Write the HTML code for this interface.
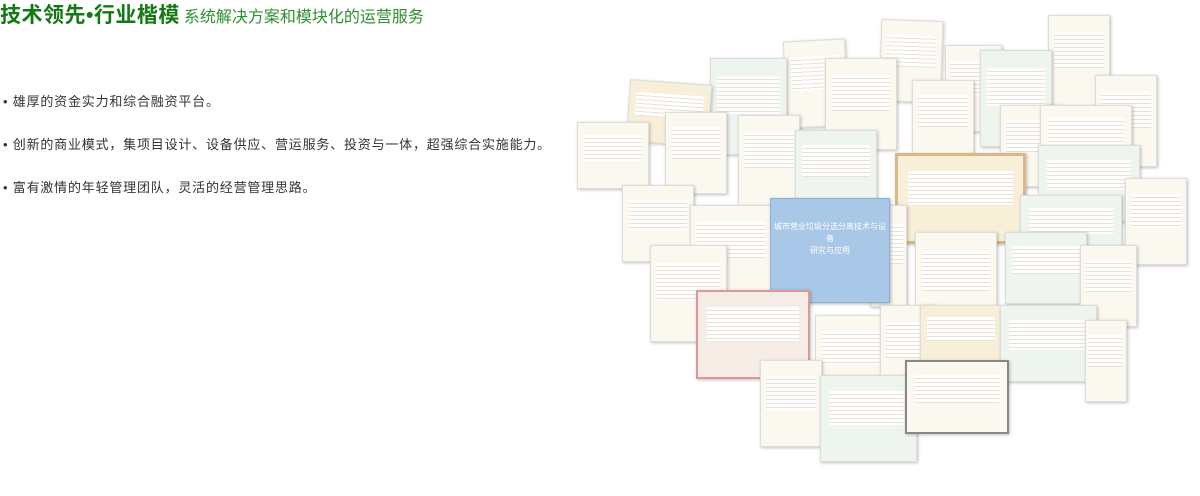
<!DOCTYPE html><html><head><meta charset="utf-8"><style>
body{margin:0;width:1200px;height:496px;background:#fff;position:relative;overflow:hidden;font-family:"Liberation Sans","Noto Sans CJK SC",sans-serif}
.t{position:absolute;left:0;top:-1px;white-space:nowrap}
.t b{font-size:21px;color:#137a13;letter-spacing:0.5px}
.t span{font-size:16px;color:#2f8f2f;margin-left:4px}
.p{position:absolute;left:3px;font-size:13px;color:#333;white-space:nowrap;letter-spacing:0.8px}
.c{position:absolute;background:#fbf8ef;border:1px solid #ddd;box-shadow:1px 1px 3px rgba(0,0,0,.25)}
.c:after{content:"";position:absolute;left:8%;right:8%;top:18%;height:40%;background:repeating-linear-gradient(#fff 0 3px,#e8e2d4 3px 4px)}
.c.g{background:#eef5ee}.c.y{background:#f7efd8}.c.r{background:#f6ece6}
</style></head><body>
<div class="t"><b>技术领先•行业楷模</b><span>系统解决方案和模块化的运营服务</span></div>
<div class="p" style="top:91px">• 雄厚的资金实力和综合融资平台。</div>
<div class="p" style="top:134px">• 创新的商业模式，集项目设计、设备供应、营运服务、投资与一体，超强综合实施能力。</div>
<div class="p" style="top:177px">• 富有激情的年轻管理团队，灵活的经营管理思路。</div>

<div class="c" style="left:880px;top:20px;width:60px;height:80px;transform:rotate(2deg)"></div>
<div class="c" style="left:1048px;top:15px;width:60px;height:90px"></div>
<div class="c" style="left:785px;top:40px;width:60px;height:85px;transform:rotate(-3deg)"></div>
<div class="c g" style="left:710px;top:58px;width:75px;height:95px"></div>
<div class="c" style="left:825px;top:58px;width:70px;height:90px"></div>
<div class="c" style="left:945px;top:45px;width:55px;height:85px"></div>
<div class="c g" style="left:980px;top:50px;width:70px;height:95px"></div>
<div class="c" style="left:1095px;top:75px;width:60px;height:90px"></div>
<div class="c y" style="left:628px;top:82px;width:80px;height:60px;transform:rotate(4deg)"></div>
<div class="c" style="left:577px;top:122px;width:70px;height:65px"></div>
<div class="c" style="left:665px;top:112px;width:60px;height:80px"></div>
<div class="c" style="left:738px;top:115px;width:60px;height:90px"></div>
<div class="c g" style="left:795px;top:130px;width:80px;height:80px"></div>
<div class="c" style="left:1000px;top:105px;width:60px;height:80px"></div>
<div class="c" style="left:1040px;top:105px;width:90px;height:65px"></div>
<div class="c" style="left:912px;top:80px;width:60px;height:80px"></div>
<div class="c y" style="left:895px;top:153px;width:125px;height:85px;border:3px solid #d7b98a"></div>
<div class="c g" style="left:1038px;top:145px;width:100px;height:75px"></div>
<div class="c" style="left:1125px;top:178px;width:60px;height:85px"></div>
<div class="c" style="left:622px;top:185px;width:70px;height:75px"></div>
<div class="c" style="left:690px;top:205px;width:80px;height:90px"></div>
<div class="c" style="left:870px;top:205px;width:35px;height:100px"></div>
<div class="c g" style="left:1020px;top:195px;width:100px;height:65px"></div>
<div class="c" style="left:915px;top:232px;width:80px;height:100px"></div>
<div class="c g" style="left:1005px;top:232px;width:80px;height:70px"></div>
<div class="c" style="left:1080px;top:245px;width:55px;height:80px"></div>
<div class="c" style="left:650px;top:245px;width:75px;height:95px"></div>
<div style="position:absolute;left:770px;top:198px;width:120px;height:105px;background:#a9c7e6;border:1px solid #8cb0d6;box-shadow:1px 1px 3px rgba(0,0,0,.3);font-size:8px;color:#fff;text-align:center;padding-top:22px;box-sizing:border-box;line-height:12px">城市营业垃圾分选分离技术与设备<br>研究与应用</div>
<div class="c r" style="left:696px;top:290px;width:110px;height:85px;border:2px solid #d99"></div>
<div class="c" style="left:815px;top:315px;width:75px;height:85px"></div>
<div class="c" style="left:880px;top:305px;width:55px;height:90px"></div>
<div class="c y" style="left:920px;top:305px;width:80px;height:60px"></div>
<div class="c g" style="left:1000px;top:305px;width:95px;height:75px"></div>
<div class="c" style="left:1085px;top:320px;width:40px;height:80px"></div>
<div class="c" style="left:760px;top:360px;width:60px;height:85px"></div>
<div class="c g" style="left:820px;top:375px;width:95px;height:85px"></div>
<div class="c" style="left:905px;top:360px;width:100px;height:70px;border:2px solid #888"></div>
</body></html>
